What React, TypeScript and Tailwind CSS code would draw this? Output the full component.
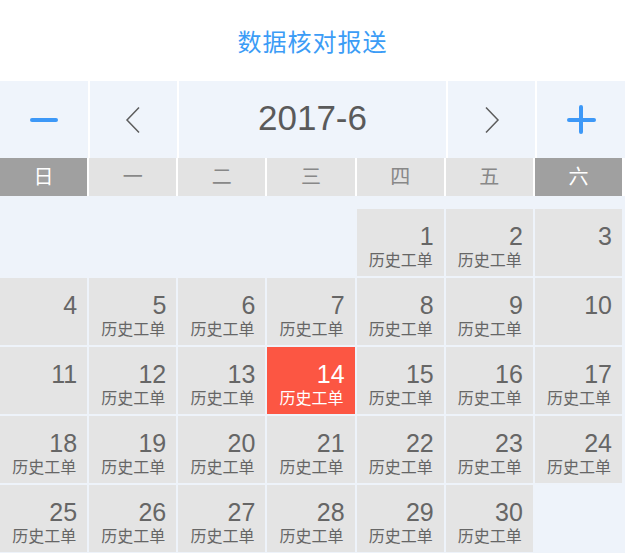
import React from "react"

const weekDays = ["日", "一", "二", "三", "四", "五", "六"]

// June 2017 starts on Thursday
const leading = 4
const days = Array.from({ length: 30 }, (_, i) => i + 1)
const noHistory = [3, 4, 10, 11]
const today = 14

const font = { fontFamily: '"Liberation Sans", "Noto Sans CJK SC", sans-serif' }

function Chevron({ dir }: { dir: "left" | "right" }) {
  return (
    <svg width="16" height="28" viewBox="0 0 16 28" fill="none">
      <path
        d={dir === "left" ? "M14 1.5 L2 14 L14 26.5" : "M2 1.5 L14 14 L2 26.5"}
        stroke="#5c5c5c"
        strokeWidth="1.5"
      />
    </svg>
  )
}

function DayCell({ day }: { day: number }) {
  const active = day === today
  const history = !noHistory.includes(day)
  return (
    <div
      className={`h-[67px] flex flex-col items-end pr-[10px] pt-[15px] ${
        active ? "bg-[#fc5643] text-white" : "bg-[#e4e4e4] text-[#666]"
      }`}
    >
      <span className="text-[25px] leading-[25px]">{day}</span>
      {history && <span className="mt-[4px] text-[16px] leading-[16px] pr-[1px]">历史工单</span>}
    </div>
  )
}

export default function App() {
  return (
    <div className="w-[625px] h-[553px] overflow-hidden bg-[#eef3fa]" style={font}>
      {/* Title */}
      <div className="h-[81px] pt-[5px] bg-white flex items-center justify-center">
        <span className="text-[24px] text-[#3b9cf6] tracking-[1px]">数据核对报送</span>
      </div>

      {/* Month switcher */}
      <div className="grid grid-cols-7 gap-x-[2px] bg-white h-[77px]">
        <div className="bg-[#eff4fb] flex items-center justify-center">
          <div className="w-[28px] h-[4px] rounded-full bg-[#3d98f7]" />
        </div>
        <div className="bg-[#eff4fb] flex items-center justify-center">
          <Chevron dir="left" />
        </div>
        <div className="col-span-3 bg-[#eff4fb] flex items-center justify-center">
          <span className="text-[35px] text-[#5a5a5a] pb-[2px]">2017-6</span>
        </div>
        <div className="bg-[#eff4fb] flex items-center justify-center">
          <Chevron dir="right" />
        </div>
        <div className="bg-[#eff4fb] flex items-center justify-center">
          <div className="relative w-[29px] h-[29px]">
            <div className="absolute left-0 top-[12.5px] w-[29px] h-[4px] rounded-full bg-[#3d98f7]" />
            <div className="absolute top-0 left-[12.5px] w-[4px] h-[29px] rounded-full bg-[#3d98f7]" />
          </div>
        </div>
      </div>

      {/* Week days */}
      <div className="grid grid-cols-7 gap-x-[2px] pr-[3px] bg-white h-[38px]">
        {weekDays.map((d, i) => (
          <div
            key={d}
            className={`flex items-center justify-center text-[20px] ${
              i === 0 || i === 6 ? "bg-[#a0a0a0] text-white" : "bg-[#e3e3e3] text-[#888]"
            }`}
          >
            {d}
          </div>
        ))}
      </div>

      {/* Days */}
      <div className="grid grid-cols-7 gap-x-[2px] gap-y-[2px] pr-[3px] pt-[13px]">
        {Array.from({ length: leading }, (_, i) => (
          <div key={`e${i}`} className="h-[67px]" />
        ))}
        {days.map((day) => (
          <DayCell key={day} day={day} />
        ))}
      </div>
    </div>
  )
}
